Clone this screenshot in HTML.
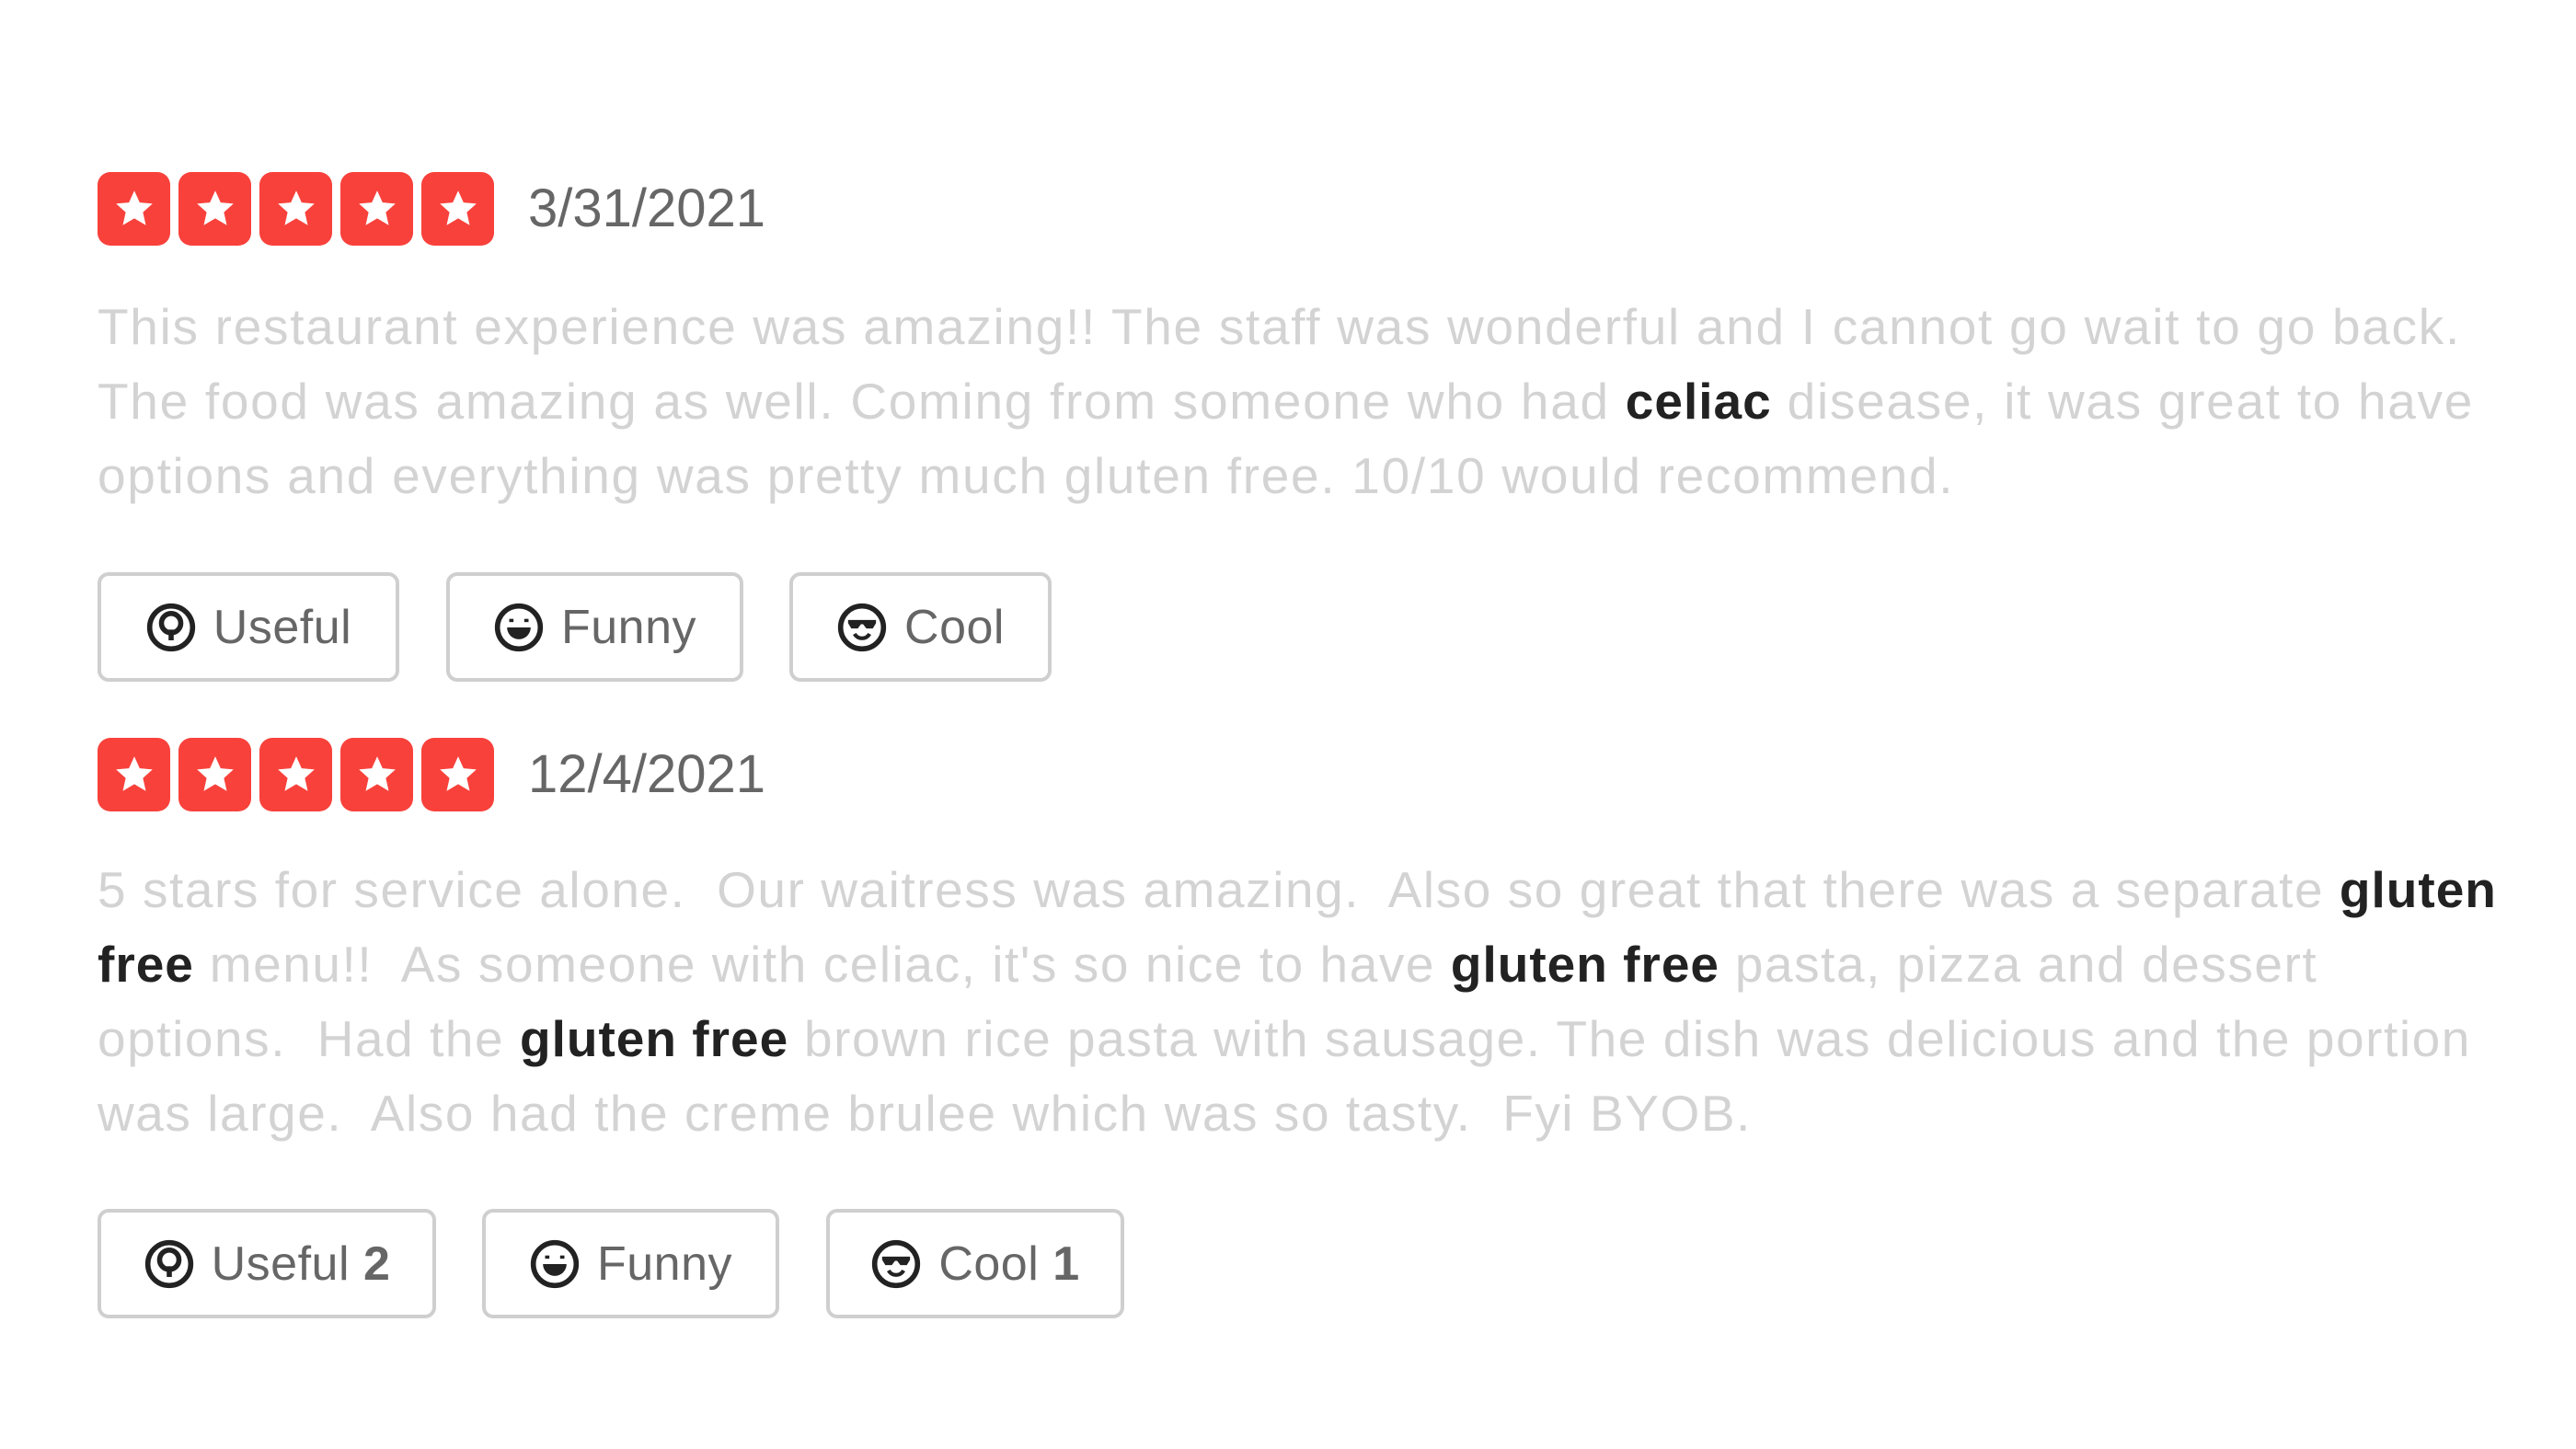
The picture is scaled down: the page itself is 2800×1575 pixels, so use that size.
<!DOCTYPE html>
<html><head><meta charset="utf-8"><style>
html,body{margin:0;padding:0;background:#fff;width:2800px;height:1575px;overflow:hidden;position:relative;font-family:"Liberation Sans",sans-serif}
.stars{position:absolute;left:106px;display:flex;gap:9px}
.star{width:79px;height:80px;background:#f9413b;border-radius:14px;display:flex;align-items:center;justify-content:center}
.date{position:absolute;left:574px;font-size:58px;color:#666;line-height:80px}
.para{position:absolute;left:106px;font-size:55px;line-height:81px;color:#d3d3d3;white-space:pre;letter-spacing:1.7px}
.para b{color:#222;letter-spacing:1px}
.btn{position:absolute;height:110px;border:4px solid #cfcfcf;border-radius:12px;box-sizing:border-box;display:flex;align-items:center;justify-content:center;gap:18px;font-size:52px;color:#666;letter-spacing:0.5px}
.btn b{color:#666}
.btn svg{width:56px;height:56px}
</style></head><body>

<div class="stars" style="top:187px">
<div class="star"><svg width="50" height="50" viewBox="0 0 24 24"><path fill="#fff" d="M12 2.5l2.8 6.2 6.7.6-5 4.5 1.5 6.7L12 17l-6 3.5 1.5-6.7-5-4.5 6.7-.6z"/></svg></div>
<div class="star"><svg width="50" height="50" viewBox="0 0 24 24"><path fill="#fff" d="M12 2.5l2.8 6.2 6.7.6-5 4.5 1.5 6.7L12 17l-6 3.5 1.5-6.7-5-4.5 6.7-.6z"/></svg></div>
<div class="star"><svg width="50" height="50" viewBox="0 0 24 24"><path fill="#fff" d="M12 2.5l2.8 6.2 6.7.6-5 4.5 1.5 6.7L12 17l-6 3.5 1.5-6.7-5-4.5 6.7-.6z"/></svg></div>
<div class="star"><svg width="50" height="50" viewBox="0 0 24 24"><path fill="#fff" d="M12 2.5l2.8 6.2 6.7.6-5 4.5 1.5 6.7L12 17l-6 3.5 1.5-6.7-5-4.5 6.7-.6z"/></svg></div>
<div class="star"><svg width="50" height="50" viewBox="0 0 24 24"><path fill="#fff" d="M12 2.5l2.8 6.2 6.7.6-5 4.5 1.5 6.7L12 17l-6 3.5 1.5-6.7-5-4.5 6.7-.6z"/></svg></div>
</div>
<div class="date" style="top:187px">3/31/2021</div>

<div class="para" style="top:315px">This restaurant experience was amazing!! The staff was wonderful and I cannot go wait to go back.
The food was amazing as well. Coming from someone who had <b>celiac</b> disease, it was great to have
options and everything was pretty much gluten free. 10/10 would recommend.</div>

<div class="btn" style="left:106px;top:622px;width:328px;height:119px">
<svg viewBox="0 0 24 24"><circle cx="12" cy="12" r="10" fill="none" stroke="#222" stroke-width="2.4"/><circle cx="12" cy="10" r="4.5" fill="none" stroke="#222" stroke-width="2.4"/><rect x="10.8" y="13" width="2.4" height="5" fill="#222"/></svg>Useful</div>
<div class="btn" style="left:485px;top:622px;width:323px;height:119px">
<svg viewBox="0 0 24 24"><circle cx="12" cy="12" r="10" fill="none" stroke="#222" stroke-width="2.4"/><rect x="7.5" y="8" width="2" height="1.5" fill="#222"/><rect x="14.5" y="8" width="2" height="1.5" fill="#222"/><path d="M6.5 12h11a5.5 5.5 0 0 1-11 0z" fill="#222"/></svg>Funny</div>
<div class="btn" style="left:858px;top:622px;width:285px;height:119px">
<svg viewBox="0 0 24 24"><circle cx="12" cy="12" r="10" fill="none" stroke="#222" stroke-width="2.4"/><path d="M5.5 8.5h13v1.5l-1.5 2.5h-3l-1.5-2h-1l-1.5 2h-3L5.5 10z" fill="#222"/><path d="M8.5 15a4 4 0 0 0 7 0" fill="none" stroke="#222" stroke-width="1.8"/></svg>Cool</div>

<div class="stars" style="top:802px">
<div class="star"><svg width="50" height="50" viewBox="0 0 24 24"><path fill="#fff" d="M12 2.5l2.8 6.2 6.7.6-5 4.5 1.5 6.7L12 17l-6 3.5 1.5-6.7-5-4.5 6.7-.6z"/></svg></div>
<div class="star"><svg width="50" height="50" viewBox="0 0 24 24"><path fill="#fff" d="M12 2.5l2.8 6.2 6.7.6-5 4.5 1.5 6.7L12 17l-6 3.5 1.5-6.7-5-4.5 6.7-.6z"/></svg></div>
<div class="star"><svg width="50" height="50" viewBox="0 0 24 24"><path fill="#fff" d="M12 2.5l2.8 6.2 6.7.6-5 4.5 1.5 6.7L12 17l-6 3.5 1.5-6.7-5-4.5 6.7-.6z"/></svg></div>
<div class="star"><svg width="50" height="50" viewBox="0 0 24 24"><path fill="#fff" d="M12 2.5l2.8 6.2 6.7.6-5 4.5 1.5 6.7L12 17l-6 3.5 1.5-6.7-5-4.5 6.7-.6z"/></svg></div>
<div class="star"><svg width="50" height="50" viewBox="0 0 24 24"><path fill="#fff" d="M12 2.5l2.8 6.2 6.7.6-5 4.5 1.5 6.7L12 17l-6 3.5 1.5-6.7-5-4.5 6.7-.6z"/></svg></div>
</div>
<div class="date" style="top:802px">12/4/2021</div>

<div class="para" style="top:927px;letter-spacing:1.55px">5 stars for service alone.  Our waitress was amazing.  Also so great that there was a separate <b>gluten</b>
<b>free</b> menu!!  As someone with celiac, it's so nice to have <b>gluten free</b> pasta, pizza and dessert
options.  Had the <b>gluten free</b> brown rice pasta with sausage. The dish was delicious and the portion
was large.  Also had the creme brulee which was so tasty.  Fyi BYOB.</div>

<div class="btn" style="left:106px;top:1314px;width:368px;height:119px">
<svg viewBox="0 0 24 24"><circle cx="12" cy="12" r="10" fill="none" stroke="#222" stroke-width="2.4"/><circle cx="12" cy="10" r="4.5" fill="none" stroke="#222" stroke-width="2.4"/><rect x="10.8" y="13" width="2.4" height="5" fill="#222"/></svg><span>Useful <b>2</b></span></div>
<div class="btn" style="left:524px;top:1314px;width:323px;height:119px">
<svg viewBox="0 0 24 24"><circle cx="12" cy="12" r="10" fill="none" stroke="#222" stroke-width="2.4"/><rect x="7.5" y="8" width="2" height="1.5" fill="#222"/><rect x="14.5" y="8" width="2" height="1.5" fill="#222"/><path d="M6.5 12h11a5.5 5.5 0 0 1-11 0z" fill="#222"/></svg>Funny</div>
<div class="btn" style="left:898px;top:1314px;width:324px;height:119px">
<svg viewBox="0 0 24 24"><circle cx="12" cy="12" r="10" fill="none" stroke="#222" stroke-width="2.4"/><path d="M5.5 8.5h13v1.5l-1.5 2.5h-3l-1.5-2h-1l-1.5 2h-3L5.5 10z" fill="#222"/><path d="M8.5 15a4 4 0 0 0 7 0" fill="none" stroke="#222" stroke-width="1.8"/></svg><span>Cool <b>1</b></span></div>

</body></html>
